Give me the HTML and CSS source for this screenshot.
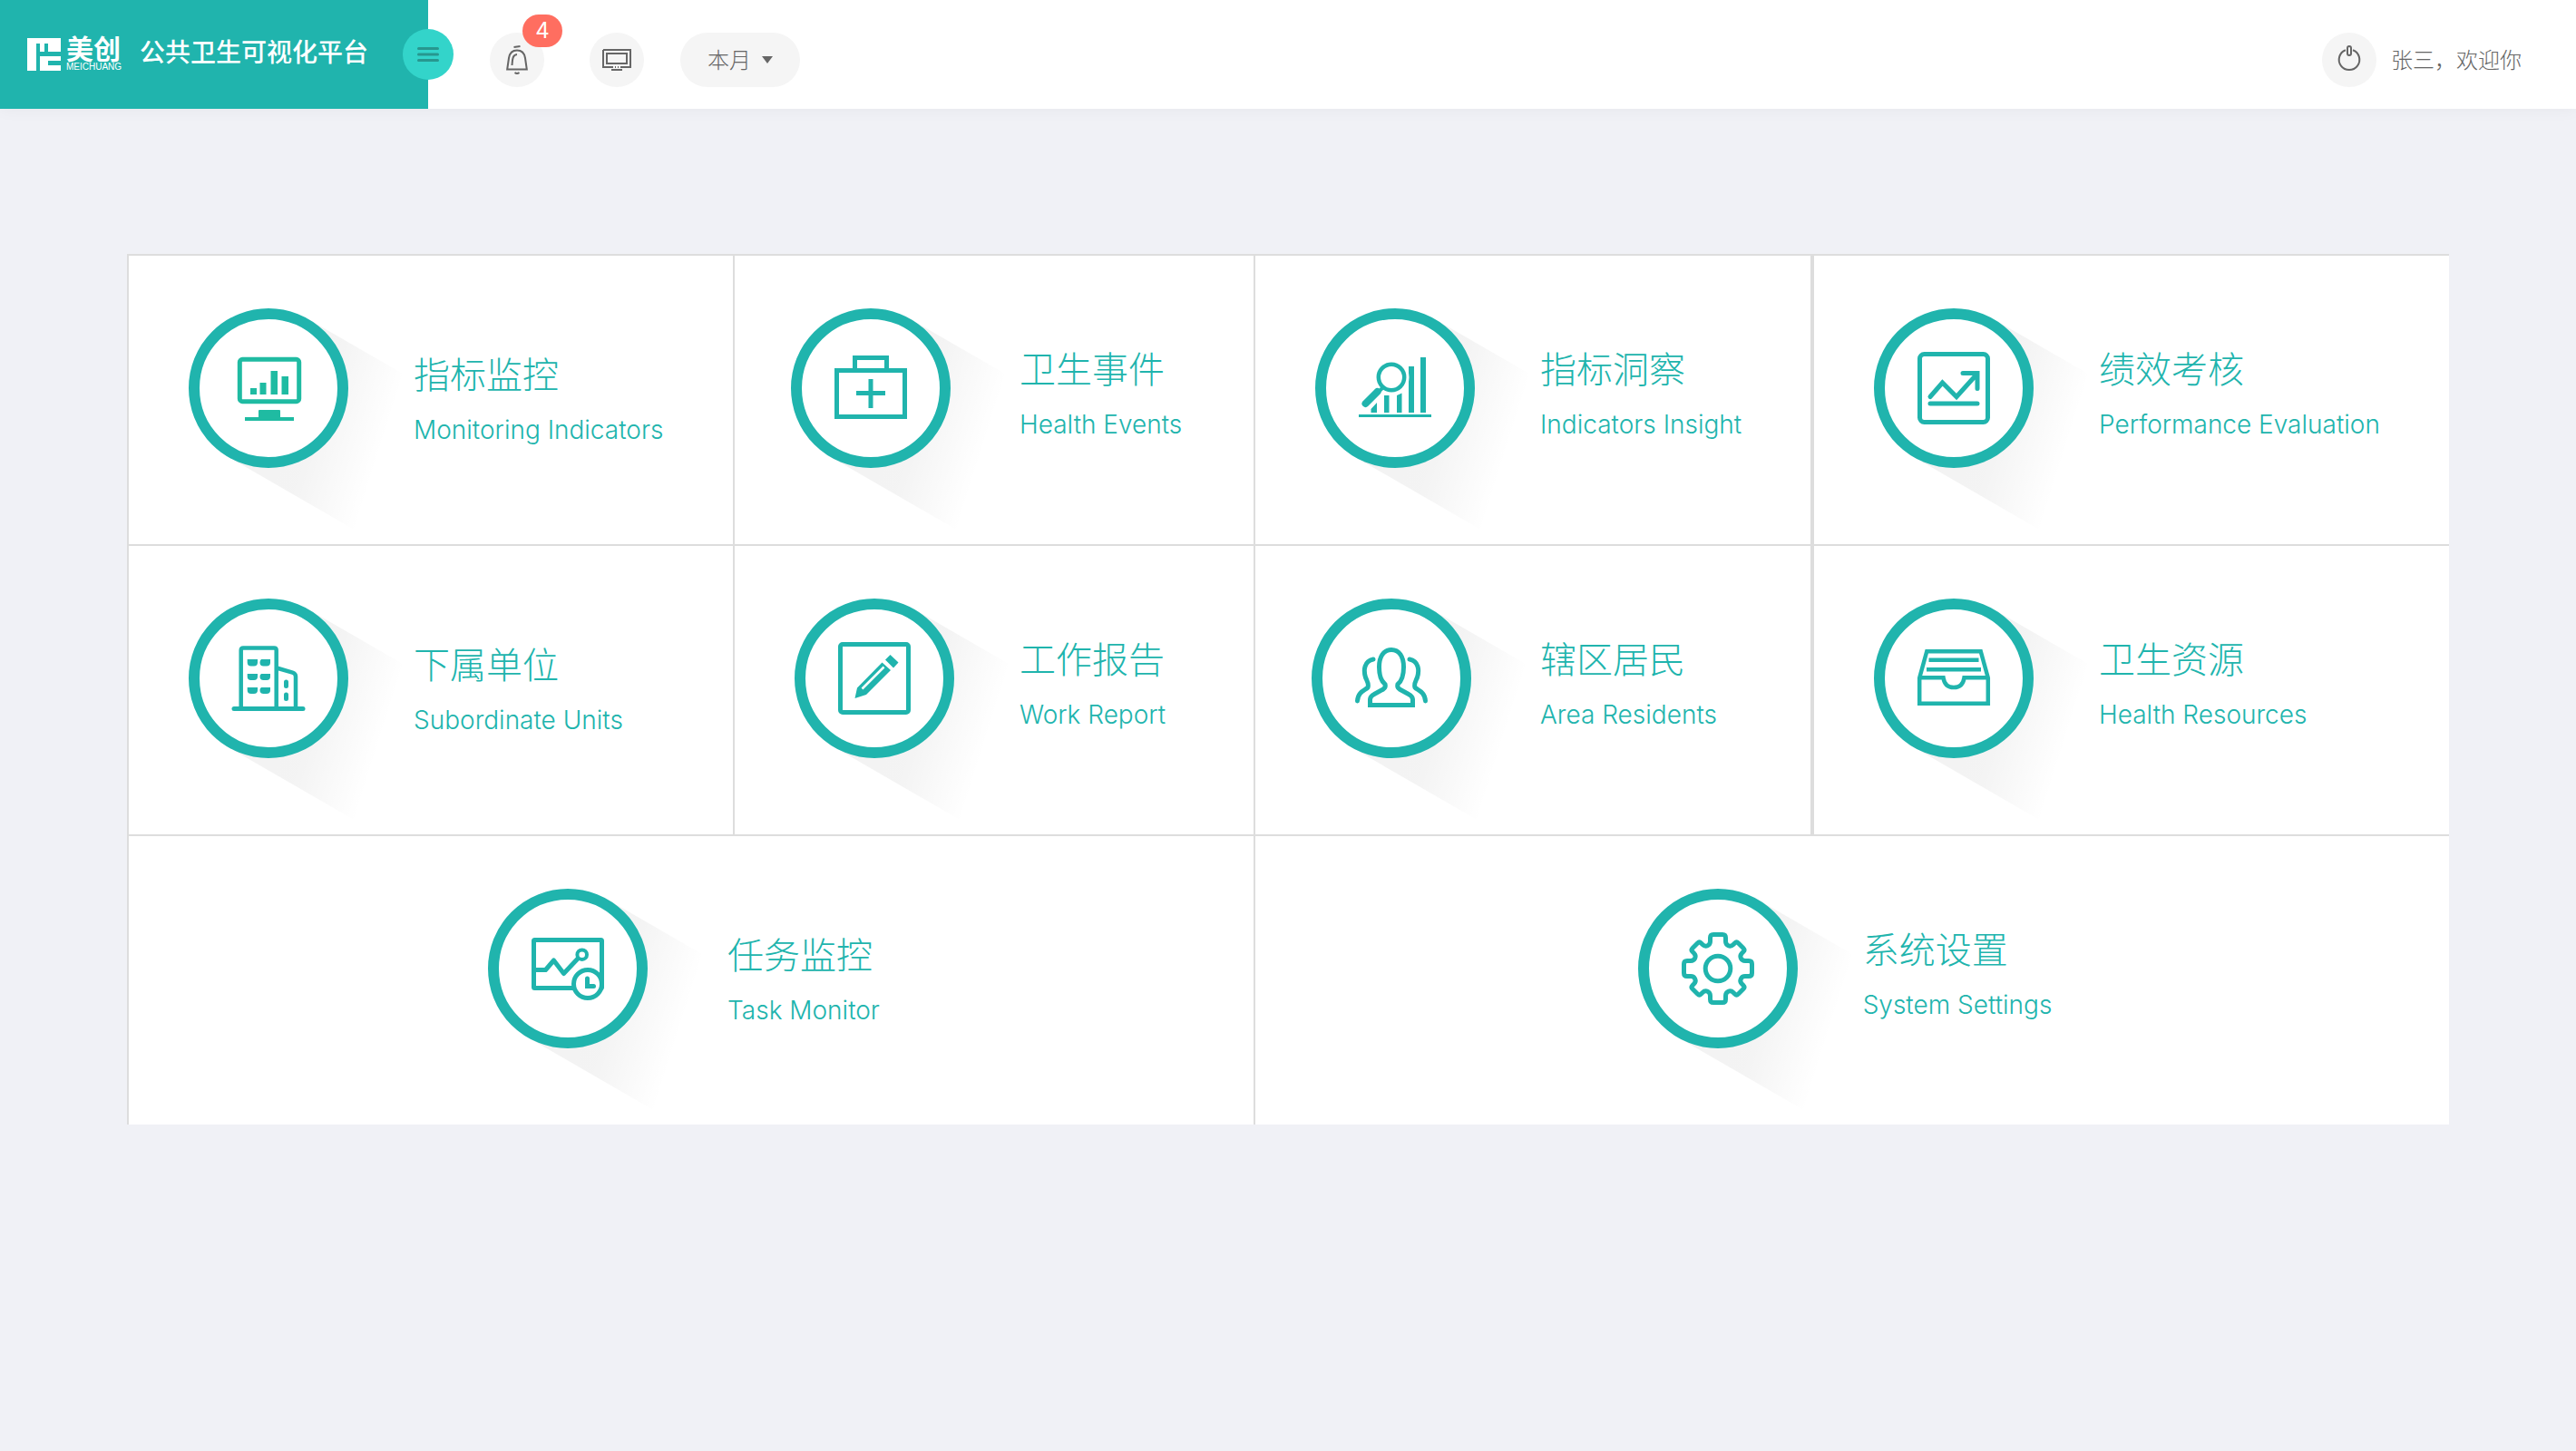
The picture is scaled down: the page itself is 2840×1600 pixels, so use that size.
FILE: index.html
```html
<!DOCTYPE html>
<html lang="zh-CN">
<head>
<meta charset="utf-8">
<meta name="viewport" content="width=device-width, initial-scale=1">
<title>公共卫生可视化平台</title>
<link rel="stylesheet" href="styles.css">
</head>
<body>
<svg class="defs" width="0" height="0" aria-hidden="true">
  <defs>
    <linearGradient id="fade" gradientUnits="userSpaceOnUse" x1="88" y1="88" x2="221" y2="130">
      <stop offset="0" stop-color="#000" stop-opacity=".05"/>
      <stop offset=".45" stop-color="#000" stop-opacity=".045"/>
      <stop offset="1" stop-color="#000" stop-opacity="0"/>
    </linearGradient>
    <g id="ring">
      <path d="M132 12L262 87V290L44 164Z" fill="url(#fade)" stroke="none"/>
      <circle cx="88" cy="88" r="82" fill="#fff" stroke-width="12"/>
    </g>
  </defs>
</svg>

<header class="topbar">
  <div class="brand">
    <svg class="brand-mark" viewBox="0 0 37 36" aria-hidden="true"><path d="M0 0H37V15H14V6H10V36H0Z"/><path d="M14 20H37V25H23V30H37V36H14Z"/><path class="brand-cut" d="M19 6h4v9h-4z"/></svg>
    <div class="brand-name">
      <span class="brand-cn">美创</span>
      <span class="brand-en">MEICHUANG</span>
    </div>
    <h1 class="brand-title">公共卫生可视化平台</h1>
    <button class="menu-toggle" type="button" aria-label="菜单">
      <svg viewBox="0 0 24 16" aria-hidden="true"><path d="M1.500 1.500h21M1.500 8h21M1.500 14.500h21"/></svg>
    </button>
  </div>

  <div class="tools">
    <button class="round" type="button" aria-label="通知">
      <svg viewBox="0 0 60 60" aria-hidden="true">
        <path d="M19.200 40.500L21 28C22 21.500 25 19.500 30 19.500S38 21.500 39 28L40.800 40.500Z"/>
        <path d="M24.500 36C25 31 24.500 24.500 30 24"/>
        <path d="M26.500 16L33.500 15M27.500 44Q30 46 32.500 44"/>
      </svg>
      <span class="badge">4</span>
    </button>
    <button class="round" type="button" aria-label="大屏">
      <svg viewBox="0 0 60 60" aria-hidden="true">
        <path d="M15 19H45V38H34M26 38H15V19M24 41H36"/>
        <path d="M19 23H41V34H19Z"/>
        <path d="M28 38H29M31 38H32"/>
      </svg>
    </button>
    <div class="period">
      <select aria-label="统计周期"><option>本月</option></select>
      <svg class="caret" viewBox="0 0 12 8" aria-hidden="true"><path d="M0 0H12L6 8Z"/></svg>
    </div>
  </div>

  <div class="user">
    <button class="round" type="button" aria-label="退出">
      <svg viewBox="0 0 60 60" aria-hidden="true">
        <path d="M26 19.200A11.300 11.300 0 1 0 34 19.200"/>
        <rect x="28" y="15" width="4" height="10" rx="2"/>
      </svg>
    </button>
    <span>张三，欢迎你</span>
  </div>
</header>

<main class="panel">
  <div class="row">
    <a class="tile" href="#">
      <svg class="icon" viewBox="0 0 176 176" aria-hidden="true"><use href="#ring"/>
        <g class="green"><rect x="56.300" y="56.300" width="65.400" height="46.400" rx="3"/>
        <path class="solid" d="M68 88h7v7h-7zM78.500 82h7v13h-7zM90.500 69h7.500v26h-7.500zM102.500 75h7.500v20h-7.500zM77 113q0-1 1-1h22q1 0 1 1v7h15v4h-54v-4h15z"/></g>
      </svg>
      <span class="label"><span class="cn">指标监控</span><span class="en">Monitoring Indicators</span></span>
    </a>
    <a class="tile tile-near" href="#">
      <svg class="icon" viewBox="0 0 176 176" aria-hidden="true"><use href="#ring"/>
        <path d="M50.500 68.500h75v51h-75zM70.500 68V54.500h35V68M72 93.500h32M88 78v32"/>
      </svg>
      <span class="label"><span class="cn">卫生事件</span><span class="en">Health Events</span></span>
    </a>
    <a class="tile" href="#">
      <svg class="icon" viewBox="0 0 176 176" aria-hidden="true"><use href="#ring"/>
        <path class="solid" d="M48 117h80v3H48zM116 54h6v61h-6zM103 64h6v51h-6zM90 96l5.500-2.500V115H90zM76 96h5.500v19H76zM61.500 111l6.500-7v11h-6.500z"/>
        <circle cx="84" cy="76" r="17" fill="#fff" stroke="#fff"/>
        <circle cx="84" cy="76" r="14.200" stroke-width="4.500"/>
        <path d="M75 87l-4 4" stroke-width="4"/><path d="M68.500 92L55.500 105" stroke-width="8" stroke-linecap="round"/>
      </svg>
      <span class="label"><span class="cn">指标洞察</span><span class="en">Indicators Insight</span></span>
    </a>
    <a class="tile" href="#">
      <svg class="icon" viewBox="0 0 176 176" aria-hidden="true"><use href="#ring"/>
        <rect x="50.500" y="50.500" width="75" height="75" rx="5"/>
        <path class="soft" d="M62 97.500L75.500 82 91 97.500 114 72M98 71.500h16v17M62 105h52"/>
      </svg>
      <span class="label"><span class="cn">绩效考核</span><span class="en">Performance Evaluation</span></span>
    </a>
  </div>

  <div class="row">
    <a class="tile" href="#">
      <svg class="icon" viewBox="0 0 176 176" aria-hidden="true"><use href="#ring"/>
        <path class="soft" d="M50 121.500h76"/>
        <path d="M57.700 120V57q0-2.500 2.500-2.500h34q2.500 0 2.500 2.500v63M97 76.500l17.500 5.200q3.500 1.100 3.500 4.300v34" stroke-width="4.500"/>
        <path class="solid" d="M64.700 67H76v3.500q0 4-4 4h-3.300q-4 0-4-4zM80 67h10v3.500q0 4-4 4h-3.500q-4 0-4-4 0-2.500 1.500-3.500zM64.700 83H76v3q0 4-4 4h-3.300q-4 0-4-4zM80 83h10v3q0 4-4 4h-3.500q-4 0-4-4 0-2 1.500-3zM64.700 98H76v3q0 4-4 4h-3.300q-4 0-4-4zM80 98h10v3q0 4-4 4h-3.500q-4 0-4-4 0-2 1.500-3z"/>
        <path d="M107.500 92v4.500M107.500 106v4.500" stroke-linecap="round"/>
      </svg>
      <span class="label"><span class="cn">下属单位</span><span class="en">Subordinate Units</span></span>
    </a>
    <a class="tile" href="#">
      <svg class="icon" viewBox="0 0 176 176" aria-hidden="true"><use href="#ring"/>
        <rect x="50.500" y="50.500" width="75" height="75" rx="2.500"/>
        <path class="solid" d="M66.500 110L69 98.500 96.500 70.500 106 79 79 106ZM100 67.500L105.500 62 114.500 70.500 109 76.500Z"/>
        <path d="M98.500 75.500L74.500 99.500" stroke="#fff" stroke-width="2.500"/>
      </svg>
      <span class="label"><span class="cn">工作报告</span><span class="en">Work Report</span></span>
    </a>
    <a class="tile tile-near" href="#">
      <svg class="icon" viewBox="0 0 176 176" aria-hidden="true"><use href="#ring"/>
        <path d="M64.500 117.500V111Q65 107.500 69 105.500L79 100Q82 98 81 94.500C76.500 91 74.500 84 74.500 75.500 74.500 64 79.500 56.500 88 56.500S101.500 64 101.500 75.500C101.500 84 99.500 91 95 94.500Q94 98 97 100L107 105.500Q111 107.500 111.500 111V117.500Z"/>
        <path stroke-linecap="round" d="M68 67C58 69 57 79 59.500 87 61 91 63.500 94 62 98 60 101 51 102 50.500 113M108 67C118 69 119 79 116.500 87 115 91 112.500 94 114 98 116 101 125 102 125.500 113"/>
      </svg>
      <span class="label"><span class="cn">辖区居民</span><span class="en">Area Residents</span></span>
    </a>
    <a class="tile" href="#">
      <svg class="icon" viewBox="0 0 176 176" aria-hidden="true"><use href="#ring"/>
        <g stroke-width="4.500"><path d="M50.200 87.500L58.300 58.200H117.700L125.800 87.500V115.800H50.200ZM50 87.300H76.500C77.500 94 81.500 98 88 98S98.500 94 99.500 87.300H126M60.500 67.800H115.500M58 78.200H118"/></g>
      </svg>
      <span class="label"><span class="cn">卫生资源</span><span class="en">Health Resources</span></span>
    </a>
  </div>

  <div class="row row-half">
    <a class="tile tile-roomy" href="#">
      <svg class="icon" viewBox="0 0 176 176" aria-hidden="true"><use href="#ring"/>
        <rect x="50.500" y="56.500" width="75" height="53" rx="1"/>
        <path stroke-linejoin="round" d="M51 89.500H63.500L72.500 79 83.500 93.500 100 76"/>
        <circle cx="103.700" cy="72.700" r="5.300" fill="#fff" stroke-width="4"/>
        <circle cx="110" cy="105" r="15.500" fill="#fff"/>
        <path class="soft" d="M109.500 99V107.500H116.500" stroke-width="4"/>
      </svg>
      <span class="label"><span class="cn">任务监控</span><span class="en">Task Monitor</span></span>
    </a>
    <a class="tile" href="#">
      <svg class="icon" viewBox="0 0 176 176" aria-hidden="true"><use href="#ring"/>
        <g transform="translate(88 88)">
          <path id="cog" d="M0-37.500H5Q8.500-37.500 8.500-34V-30C8.500-25.500 13.500-23 17-26.500L18.500-28Q20.500-30 22.500-28L28-22.500Q30-20.500 28-18.500L26.500-17C23-13.500 25.500-8.500 30-8.500H34Q37.500-8.500 37.500-5V0"/>
          <use href="#cog" transform="rotate(90)"/><use href="#cog" transform="rotate(180)"/><use href="#cog" transform="rotate(270)"/>
          <circle r="13.800"/>
        </g>
      </svg>
      <span class="label"><span class="cn">系统设置</span><span class="en">System Settings</span></span>
    </a>
  </div>
</main>
</body>
</html>
```
FILE: styles.css
```css
* {
  box-sizing: border-box;
}

body {
  margin: 0;
  min-height: 100vh;
  background: #f0f1f6;
  color: #666;
  font-family: Inter, "Noto Sans CJK SC", sans-serif;
  font-size: 24px;
  font-weight: 300;
}

.defs {
  position: absolute;
}

button {
  padding: 0;
  border: 0;
  font: inherit;
  cursor: pointer;
}

/* Top bar */

.topbar {
  display: flex;
  height: 120px;
  background: #fff;
  box-shadow: 0 2px 16px rgba(0, 0, 0, 0.04);
}

.brand {
  position: relative;
  display: flex;
  flex: none;
  width: 472px;
  height: 120px;
  padding: 42px 0 0 30px;
  background: #20b4ad;
  color: #fff;
}

.brand-mark {
  width: 37px;
  height: 36px;
  margin-right: 4px;
  fill: #fff;
}

.brand-cut {
  fill: #20b4ad;
}

.brand-name {
  display: flex;
  flex-direction: column;
  width: 68px;
  margin-right: 15px;
}

.brand-cn {
  padding-left: 2px;
  font-size: 30px;
  font-weight: 700;
  line-height: 24px;
}

.brand-en {
  padding-left: 2px;
  font-family: "Liberation Sans", sans-serif;
  font-size: 10px;
  font-weight: 400;
  line-height: 16px;
}

.brand-title {
  margin: 0;
  font-size: 28px;
  font-weight: 500;
  line-height: 32px;
}

.menu-toggle {
  position: absolute;
  top: 32px;
  right: -28px;
  display: grid;
  place-items: center;
  width: 56px;
  height: 56px;
  border-radius: 50%;
  background: #33d4ca;
}

.menu-toggle svg {
  width: 24px;
  height: 16px;
  fill: none;
  stroke: #27978f;
  stroke-width: 3;
  stroke-linecap: round;
}

.tools {
  display: flex;
  align-items: flex-start;
  padding: 36px 0 0 68px;
}

.round {
  position: relative;
  width: 60px;
  height: 60px;
  border-radius: 50%;
  background: #f5f5f5;
}

.round svg {
  display: block;
  width: 60px;
  height: 60px;
  fill: none;
  stroke: #666;
  stroke-width: 2;
}

.tools .round {
  margin-right: 50px;
}

.badge {
  position: absolute;
  top: -20px;
  left: 36px;
  width: 44px;
  height: 36px;
  border-radius: 18px;
  background: #ff6e60;
  color: #fff;
  font-weight: 400;
  line-height: 36px;
  text-align: center;
}

.tools .round:nth-child(2) {
  margin-right: 40px;
}

.period {
  display: grid;
  align-items: center;
  width: 132px;
  height: 60px;
}

.period > * {
  grid-area: 1 / 1;
}

.period select {
  width: 100%;
  height: 60px;
  padding: 0 42px 0 30px;
  border: 0;
  border-radius: 30px;
  background: #f5f5f5;
  color: #666;
  font: inherit;
  appearance: none;
}

.caret {
  justify-self: end;
  width: 12px;
  height: 8px;
  margin-right: 30px;
  fill: #666;
  pointer-events: none;
}

.user {
  display: flex;
  gap: 16px;
  margin-left: auto;
  padding: 36px 60px 0 0;
  line-height: 62px;
}

/* Module tiles */

.panel {
  margin: 160px 140px 0;
  border-left: 2px solid #ddd;
  background: #fff;
}

.row {
  display: grid;
  grid-template-columns: 668fr 574fr 616fr 700fr;
  min-height: 320px;
  border-top: 2px solid #ddd;
}

.row-half {
  grid-template-columns: 1242fr 1316fr;
}

.tile {
  display: flex;
  align-items: flex-start;
  gap: 72px;
  padding: 58px 0 0 66px;
  border-right: 2px solid #ddd;
  color: #20b4ad;
  text-decoration: none;
}

.tile:nth-child(3) {
  border-right-width: 4px;
}

.tile:last-child {
  border-right: 0;
}

.tile-near {
  gap: 76px;
  padding-left: 62px;
}

.row-half .tile {
  justify-content: center;
  padding-right: 16px;
  padding-left: 0;
}

.tile-roomy {
  gap: 88px;
}

.icon {
  flex: none;
  width: 176px;
  height: 176px;
  overflow: visible;
  fill: none;
  stroke: #20b4ad;
  stroke-width: 5;
}

.icon .solid {
  fill: #20b4ad;
  stroke: none;
}

.icon .soft {
  stroke-linecap: round;
  stroke-width: 5;
}

.icon .green {
  stroke: #1fbba2;
}

.icon .green .solid {
  fill: #1fbba2;
}

.label {
  padding-top: 38px;
  white-space: nowrap;
}

.tile:first-child .label {
  padding-top: 44px;
}

.cn,
.en {
  display: block;
  line-height: 60px;
}

.cn {
  font-size: 40px;
}

.en {
  font-size: 28px;
}
```
